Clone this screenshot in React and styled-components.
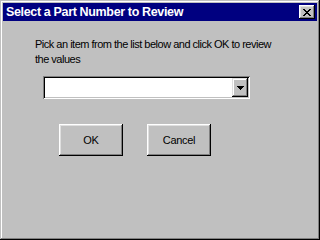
import React from "react";
import styled, { createGlobalStyle } from "styled-components";

const Global = createGlobalStyle`
  html, body { margin: 0; padding: 0; background: #c0c0c0; }
  * { box-sizing: border-box; }
`;

const Window = styled.div`
  width: 320px;
  height: 240px;
  background: #c0c0c0;
  padding: 3px;
  display: flex;
  flex-direction: column;
  box-shadow: inset -1px -1px #000, inset 1px 1px #c0c0c0,
    inset -2px -2px #808080, inset 2px 2px #fff;
  font-family: "Liberation Sans", Arial, sans-serif;
`;

const TitleBar = styled.div`
  height: 18px;
  background: #000080;
  display: flex;
  align-items: center;
  justify-content: space-between;
  padding: 0 2px 0 3px;
`;

const Title = styled.span`
  color: #fff;
  font-weight: bold;
  font-size: 12.5px;
  letter-spacing: -0.35px;
  line-height: 18px;
`;

const CloseButton = styled.button`
  width: 16px;
  height: 14px;
  padding: 0;
  border: none;
  background: #c0c0c0;
  display: flex;
  align-items: center;
  justify-content: center;
  box-shadow: inset -1px -1px #000, inset 1px 1px #fff,
    inset -2px -2px #808080, inset 2px 2px #dfdfdf;
`;

const Body = styled.div`
  flex: 1;
  padding: 16px 20px 0 32px;
  display: flex;
  flex-direction: column;
`;

const Message = styled.p`
  margin: 0;
  font-size: 11px;
  letter-spacing: -0.5px;
  line-height: 15px;
  color: #000;
  width: 244px;
`;

const Combo = styled.div`
  margin: 9px 0 0 8px;
  width: 207px;
  height: 23px;
  background: #fff;
  display: flex;
  justify-content: flex-end;
  padding: 2px;
  box-shadow: inset 1px 1px #808080, inset -1px -1px #fff,
    inset 2px 2px #000, inset -2px -2px #c0c0c0;
`;

const DropButton = styled.div`
  width: 16px;
  height: 19px;
  background: #c0c0c0;
  display: flex;
  align-items: center;
  justify-content: center;
  box-shadow: inset -1px -1px #000, inset 1px 1px #dfdfdf,
    inset -2px -2px #808080, inset 2px 2px #fff;
`;

const ButtonRow = styled.div`
  display: flex;
  gap: 24px;
  margin: 25px 0 0 24px;
`;

const Button = styled.button`
  width: 64px;
  height: 32px;
  padding: 0;
  border: none;
  background: #c0c0c0;
  font-family: "Liberation Sans", Arial, sans-serif;
  font-size: 11px;
  letter-spacing: -0.3px;
  color: #000;
  box-shadow: inset -1px -1px #000, inset 1px 1px #fff,
    inset -2px -2px #808080, inset 2px 2px #dfdfdf;
`;

export default function App() {
  return (
    <>
      <Global />
      <Window>
        <TitleBar>
          <Title>Select a Part Number to Review</Title>
          <CloseButton aria-label="Close">
            <svg width="8" height="7" viewBox="0 0 8 7" shapeRendering="crispEdges">
              <path d="M0 0h2v1h-2zM6 0h2v1h-2zM1 1h2v1h-2zM5 1h2v1h-2zM2 2h4v1h-4zM3 3h2v1h-2zM2 4h4v1h-4zM1 5h2v1h-2zM5 5h2v1h-2zM0 6h2v1h-2zM6 6h2v1h-2z" fill="#000" />
            </svg>
          </CloseButton>
        </TitleBar>
        <Body>
          <Message>
            Pick an item from the list below and click OK to review the values
          </Message>
          <Combo>
            <DropButton>
              <svg width="7" height="4" viewBox="0 0 7 4" shapeRendering="crispEdges">
                <path d="M0 0h7v1h-7zM1 1h5v1h-5zM2 2h3v1h-3zM3 3h1v1h-1z" fill="#000" />
              </svg>
            </DropButton>
          </Combo>
          <ButtonRow>
            <Button>OK</Button>
            <Button>Cancel</Button>
          </ButtonRow>
        </Body>
      </Window>
    </>
  );
}
